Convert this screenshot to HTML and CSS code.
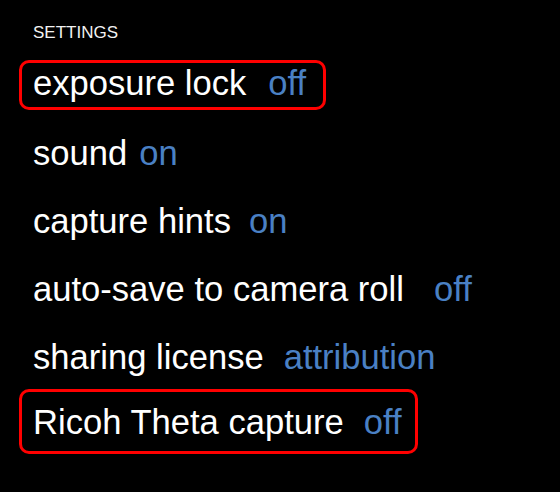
FILE: index.html
```html
<!DOCTYPE html>
<html lang="en">
<head>
<meta charset="utf-8">
<title>Settings</title>
<link rel="stylesheet" href="styles.css">
</head>
<body>
<div class="settings">
  <div class="heading">SETTINGS</div>
  <div class="list">
    <div class="row box box-first"><span class="label">exposure lock</span><span class="value v-22">off</span></div>
    <div class="row after-box"><span class="label">sound</span><span class="value v-12">on</span></div>
    <div class="row"><span class="label">capture hints</span><span class="value v-18">on</span></div>
    <div class="row"><span class="label">auto-save to camera roll</span><span class="value v-30">off</span></div>
    <div class="row"><span class="label">sharing license</span><span class="value v-20">attribution</span></div>
    <div class="row box box-last"><span class="label">Ricoh Theta capture</span><span class="value v-20">off</span></div>
  </div>
</div>
</body>
</html>
```
FILE: styles.css
```css
html, body {
  margin: 0;
  padding: 0;
  background: #000;
}

body {
  width: 560px;
  height: 492px;
  overflow: hidden;
  font-family: "Liberation Sans", Arial, sans-serif;
  color: #fff;
}

.settings {
  padding: 23px 0 0 19px;
}

.heading {
  font-size: 17px;
  line-height: 20px;
  margin-left: 14px;
  margin-bottom: 17px;
  color: #f2f2f2;
}

.list {
  display: flex;
  flex-direction: column;
  align-items: flex-start;
}

.row {
  font-size: 34.6px;
  line-height: 40px;
  padding-left: 14px;
  white-space: nowrap;
  margin-top: 28px;
}

.row.after-box {
  margin-top: 23px;
}

.box {
  border: 3px solid #ff0000;
  border-radius: 10px;
  padding-left: 11px;
}

.box-first {
  margin-top: 0;
  padding-top: 0;
  padding-bottom: 4px;
  padding-right: 17px;
}

.box-last {
  margin-top: 12px;
  padding-top: 10px;
  padding-bottom: 9px;
  padding-right: 13px;
}

.value {
  color: #4a80c4;
}

.v-12 { margin-left: 12px; }
.v-18 { margin-left: 18px; }
.v-20 { margin-left: 20px; }
.v-22 { margin-left: 22px; }
.v-30 { margin-left: 30px; }
```
